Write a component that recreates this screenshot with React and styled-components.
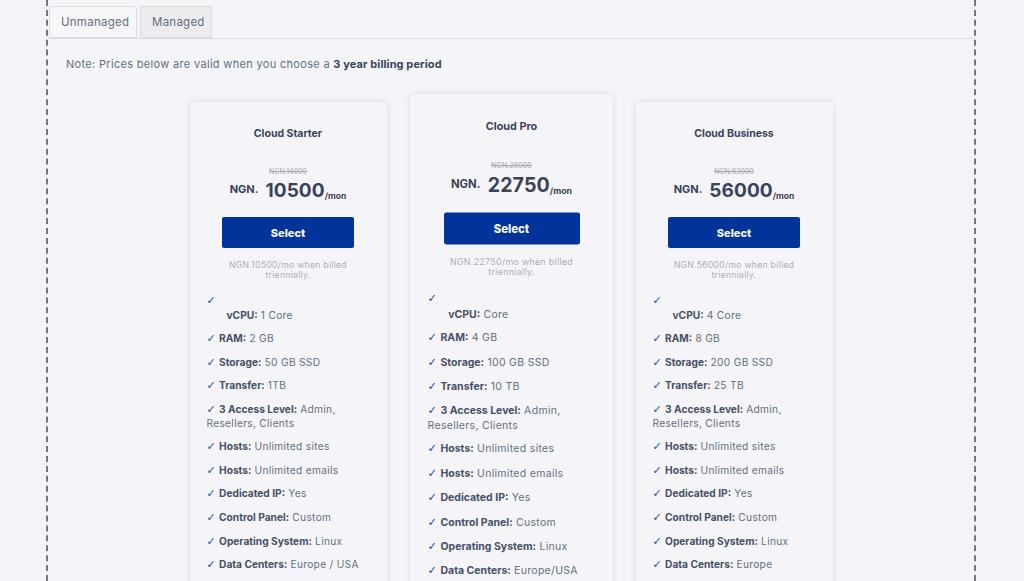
import React from "react";
import styled, { createGlobalStyle } from "styled-components";

const Global = createGlobalStyle`
  html, body { margin: 0; padding: 0; height: 581px; overflow: hidden; background: #f5f5f9; }
  body { font-family: Inter, "Liberation Sans", sans-serif; color: #566a7f; }
  * { box-sizing: border-box; }
`;

const Frame = styled.div`
  width: 930px;
  height: 581px;
  margin-left: 46px;
  padding-top: 6px;
  border-left: 2px dashed #777;
  border-right: 2px dashed #777;
  overflow: hidden;
`;
const TabBar = styled.div`
  display: flex;
  gap: 3px;
  height: 33px;
  padding-left: 1px;
  border-bottom: 1px solid #dcdde0;
`;
const Tab = styled.div`
  height: 32px;
  padding: 0 11px;
  display: flex;
  align-items: center;
  font-size: 11.5px;
  letter-spacing: 0.25px;
  color: #626f80;
  border: 1px solid #dcdde0;
  border-radius: 3px 3px 0 0;
  background: ${(p) => (p.$active ? "#f7f7fa" : "#ececee")};
  width: ${(p) => p.$w}px;
`;
const Note = styled.p`
  margin: 0;
  padding: 19px 0 0 18px;
  font-size: 11px;
  line-height: 13px;
  letter-spacing: 0.32px;
  color: #626f80;
  b { color: #39435a; font-weight: 700; letter-spacing: 0.1px; }
`;
const Plans = styled.div`
  display: flex;
  justify-content: center;
  gap: 26px;
  margin-top: 31px;
`;
const Card = styled.div`
  width: 197px;
  height: 533px;
  flex: none;
  padding: 25px 17px 0;
  border-radius: 4px;
  background: #f5f5f9;
  box-shadow: 0 0 6px rgba(67, 89, 113, 0.16);
  transform: ${(p) => (p.$featured ? "scale(1.03)" : "none")};
`;
const Title = styled.h3`
  margin: 0;
  font-size: 10.5px;
  line-height: 13px;
  font-weight: 700;
  text-align: center;
  color: #39435a;
`;
const OldPrice = styled.div`
  margin-top: 27px;
  height: 10px;
  font-size: 7px;
  line-height: 10px;
  text-align: center;
  color: #a8a8ad;
  text-decoration: line-through;
`;
const Price = styled.div`
  display: flex;
  justify-content: center;
  align-items: flex-end;
  height: 24px;
  margin-top: 2px;
  color: #39435a;
  font-weight: 700;
`;
const Currency = styled.span`
  font-size: 11px;
  line-height: 13px;
  margin: 0 7px 7px 0;
`;
const Amount = styled.span`
  font-size: 19px;
  line-height: 24px;
  letter-spacing: 0.1px;
`;
const Period = styled.span`
  font-size: 8.5px;
  line-height: 10px;
  margin-bottom: 2px;
`;
const SelectButton = styled.button`
  display: block;
  width: 132px;
  height: 31px;
  margin: 14px auto 0;
  border: 0;
  border-radius: 2px;
  background: #00349b;
  color: #f5f5f9;
  font-family: inherit;
  font-size: 11px;
  font-weight: 800;
`;
const Billing = styled.p`
  margin: 12px 0 0;
  font-size: 8.6px;
  line-height: 10px;
  letter-spacing: 0.3px;
  text-align: center;
  color: #adadb2;
`;
const List = styled.ul`
  list-style: none;
  margin: 9px 0 0;
  padding: 0;
`;
const Item = styled.li`
  padding: ${(p) => (p.$two ? 4 : 5)}px 0 ${(p) => (p.$two ? 5 : 5)}px;
  min-height: 23.6px;
  font-size: 10.2px;
  line-height: 13.6px;
  letter-spacing: 0.3px;
  color: #626f80;
  b { color: #465066; font-weight: 700; letter-spacing: 0; }
`;
const Check = styled.span`
  color: #1b4fa8;
  font-family: "DejaVu Sans", sans-serif;
  font-size: 11px;
  font-weight: 700;
  margin-right: 3px;
`;
const Indented = styled.div`
  padding: 1px 0 0 20px;
`;

const plans = [
  { name: "Cloud Starter", old: "NGN.14000", price: "10500", cpu: "1 Core", ram: "2 GB", disk: "50 GB SSD", transfer: "1TB", dc: "Europe / USA" },
  { name: "Cloud Pro", old: "NGN.28000", price: "22750", cpu: "Core", ram: "4 GB", disk: "100 GB SSD", transfer: "10 TB", dc: "Europe/USA", featured: true },
  { name: "Cloud Business", old: "NGN.63000", price: "56000", cpu: "4 Core", ram: "8 GB", disk: "200 GB SSD", transfer: "25 TB", dc: "Europe" },
];

const Feature = ({ label, value }) => (
  <Item>
    <Check>✓</Check>
    <b>{label}:</b> {value}
  </Item>
);

export default function App() {
  return (
    <>
      <Global />
      <Frame>
        <TabBar>
          <Tab $active $w={88}>Unmanaged</Tab>
          <Tab $w={72}>Managed</Tab>
        </TabBar>
        <Note>
          Note: Prices below are valid when you choose a <b>3 year billing period</b>
        </Note>
        <Plans>
          {plans.map((p) => (
            <Card key={p.name} $featured={p.featured}>
              <Title>{p.name}</Title>
              <OldPrice>{p.old}</OldPrice>
              <Price>
                <Currency>NGN.</Currency>
                <Amount>{p.price}</Amount>
                <Period>/mon</Period>
              </Price>
              <SelectButton>Select</SelectButton>
              <Billing>NGN.{p.price}/mo when billed triennially.</Billing>
              <List>
                <Item>
                  <Check>✓</Check>
                  <Indented><b>vCPU:</b> {p.cpu}</Indented>
                </Item>
                <Feature label="RAM" value={p.ram} />
                <Feature label="Storage" value={p.disk} />
                <Feature label="Transfer" value={p.transfer} />
                <Feature label="3 Access Level" value="Admin, Resellers, Clients" />
                <Feature label="Hosts" value="Unlimited sites" />
                <Feature label="Hosts" value="Unlimited emails" />
                <Feature label="Dedicated IP" value="Yes" />
                <Feature label="Control Panel" value="Custom" />
                <Feature label="Operating System" value="Linux" />
                <Feature label="Data Centers" value={p.dc} />
              </List>
            </Card>
          ))}
        </Plans>
      </Frame>
    </>
  );
}
